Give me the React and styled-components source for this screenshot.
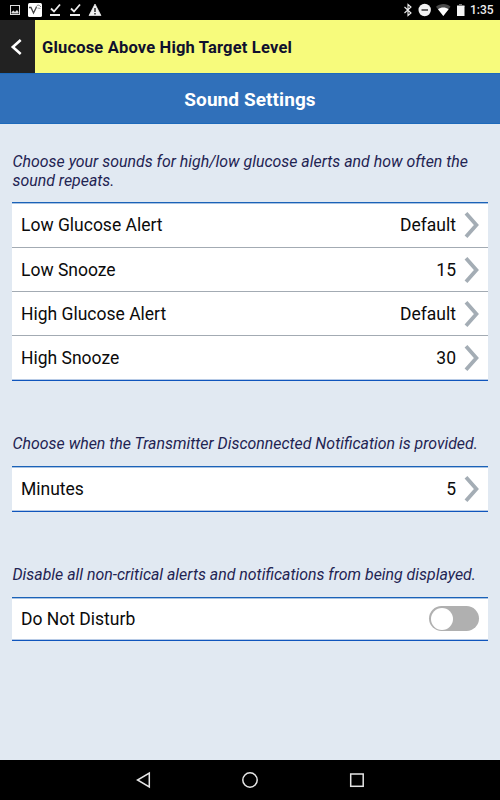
import React, { useState } from "react";
import styled, { createGlobalStyle } from "styled-components";

const GlobalStyle = createGlobalStyle`
    * {
        box-sizing: border-box;
    }

    body {
        margin: 0;
        font-family: Roboto, "Liberation Sans", sans-serif;
        background: #e1e9f2;
    }
`;

const Screen = styled.div`
    display: flex;
    flex-direction: column;
    width: 500px;
    height: 800px;
    overflow: hidden;
    background: #e1e9f2;
`;

const StatusBar = styled.div`
    display: flex;
    justify-content: space-between;
    height: 20px;
    flex: none;
    background: #000;
`;

const StatusIcon = styled.svg`
    display: block;
    flex: none;
    height: 20px;
    width: ${(props) => props.$width}px;
`;

const StatusRight = styled.div`
    display: flex;
    padding-right: 6px;
`;

const Clock = styled.span`
    width: 24px;
    color: #eee;
    font-size: 12px;
    font-weight: 500;
    line-height: 21px;
    white-space: nowrap;
`;

const Header = styled.header`
    display: flex;
    height: 53px;
    flex: none;
    background: #f7fb7c;
`;

const BackButton = styled.button`
    display: flex;
    width: 35px;
    padding: 0;
    border: 0;
    background: #222;
`;

const HeaderTitle = styled.h1`
    margin: 0;
    padding-left: 7px;
    color: #10102e;
    font-size: 16.5px;
    font-weight: 700;
    letter-spacing: 0.18px;
    line-height: 55px;
    white-space: nowrap;
`;

const TitleBar = styled.h2`
    height: 51px;
    flex: none;
    margin: 0;
    border-top: 1px solid #1d6abb;
    border-bottom: 1px solid #1d6abb;
    background: #3070ba;
    color: #fff;
    font-size: 19px;
    font-weight: 700;
    letter-spacing: 0.08px;
    line-height: 51px;
    text-align: center;
`;

const Content = styled.main`
    flex: 1;
    padding: 28px 12px 0;
`;

const Description = styled.p`
    margin: 0 0 12px;
    padding-left: 0.5px;
    color: #1f2452;
    font-size: 15.9px;
    font-style: italic;
    line-height: 19px;
    white-space: pre;
`;

const Section = styled.section`
    & + & {
        margin-top: 53px;
    }

    & + & ${Description} {
        margin-bottom: 13px;
    }
`;

const List = styled.div`
    padding-bottom: 1px;
    border-top: 1px solid #1a62b8;
    border-bottom: 1px solid #0f55bd;
    background: #fff;
    box-shadow: inset 0 1px #a9c3e2, inset 0 -1px #b8cbe6;
`;

const Row = styled.div`
    display: flex;
    align-items: center;
    height: ${(props) => props.$height || 44}px;
    padding: 0 9px;
    color: #0b0b0b;
    font-size: 17.5px;

    & + & {
        border-top: 1px solid #a3abb3;
    }
`;

const Label = styled.span`
    flex: 1;
`;

const Value = styled.span`
    margin-right: 8px;
`;

const Chevron = styled.svg`
    display: block;
    width: 15px;
    height: 28px;
`;

const Toggle = styled.button`
    display: flex;
    justify-content: ${(props) => (props.$on ? "flex-end" : "flex-start")};
    width: 50px;
    height: 25px;
    padding: 1.5px;
    border: 0;
    border-radius: 13px;
    background: ${(props) => (props.$on ? "#3070ba" : "#b0b0b0")};
`;

const Knob = styled.span`
    width: 22px;
    height: 22px;
    border-radius: 50%;
    background: #fff;
`;

const NavBar = styled.nav`
    height: 40px;
    flex: none;
    background: #000;
`;

const NavIcons = styled.svg`
    display: block;
`;

const SettingRow = ({ label, value, height }) => (
    <Row $height={height}>
        <Label>{label}</Label>
        <Value>{value}</Value>
        <Chevron viewBox="0 0 15 28" fill="none">
            <path d="M2 2.2L12.4 14L2 25.8" stroke="#a4adb5" strokeWidth="3.8" />
        </Chevron>
    </Row>
);

const StatusIcons = () => (
    <StatusBar>
        <StatusIcon $width={110} viewBox="0 0 110 20" fill="none">
            {/* picture */}
            <rect x="10.5" y="5.5" width="9" height="9" stroke="#ddd" />
            <path d="M11.5 13.5V12L13.5 10.5L15 12L17 10L18.5 12V13.5Z" fill="#ddd" />
            {/* glucose app */}
            <rect x="28" y="3" width="14" height="14" rx="1.5" fill="#fff" />
            <path d="M29 7.5H31L33.5 13L36.5 7" stroke="#444" strokeWidth="1.3" />
            <path d="M36 7.5C37 4.5 39 4.5 41 7" stroke="#777" strokeWidth="1" />
            <path d="M37.5 8L40.5 8.5" stroke="#888" strokeWidth=".8" />
            {/* finished downloads */}
            <path d="M51 8.5L54 11.5L60 4.5M71 8.5L74 11.5L80 4.5" stroke="#eee" strokeWidth="1.8" />
            <path d="M50 15H60M70 15H80" stroke="#eee" strokeWidth="1.8" />
            {/* warning */}
            <path d="M95 4L101 15.5H89Z" fill="#f2f2f2" stroke="#f2f2f2" strokeWidth=".7" />
            <path d="M95 8V12M95 13V14.4" stroke="#111" strokeWidth="1.3" />
        </StatusIcon>
        <StatusRight>
            <StatusIcon $width={70} viewBox="400 0 70 20" fill="none">
                {/* bluetooth */}
                <path d="M404.5 7L411 13L408 15.5V4.5L411 7L404.5 13" stroke="#eee" strokeWidth="1.1" />
                {/* do not disturb */}
                <circle cx="424.7" cy="10" r="6.2" fill="#f2f2f2" />
                <path d="M421.5 10H428" stroke="#333" strokeWidth="1.5" />
                {/* wifi */}
                <path d="M436 6.8C440 3.2 447 3.2 450.5 6.8L443.3 16Z" fill="#4a4a4a" />
                <path d="M438 9.2C441 6.9 445.5 6.9 448.6 9.2L443.3 16Z" fill="#fff" />
                {/* battery */}
                <path d="M457 5H459V4H462V5H464.5V7H457Z" fill="#777" />
                <path d="M457 6H464.5V16H457Z" fill="#f5f5f5" />
            </StatusIcon>
            <Clock>1:35</Clock>
        </StatusRight>
    </StatusBar>
);

export default () => {
    const [doNotDisturb, setDoNotDisturb] = useState(false);

    return (
        <Screen>
            <GlobalStyle />
            <StatusIcons />
            <Header>
                <BackButton aria-label="Back">
                    <svg width="35" height="53" viewBox="0 0 35 53" fill="none">
                        <path d="M20.7 20L12.8 27L20.7 34" stroke="#fff" strokeWidth="2.6" />
                    </svg>
                </BackButton>
                <HeaderTitle>Glucose Above High Target Level</HeaderTitle>
            </Header>
            <TitleBar>Sound Settings</TitleBar>
            <Content>
                <Section>
                    <Description>
                        {"Choose your sounds for high/low glucose alerts and how often the\nsound repeats."}
                    </Description>
                    <List>
                        <SettingRow label="Low Glucose Alert" value="Default" />
                        <SettingRow label="Low Snooze" value="15" />
                        <SettingRow label="High Glucose Alert" value="Default" />
                        <SettingRow label="High Snooze" value="30" />
                    </List>
                </Section>
                <Section>
                    <Description>
                        Choose when the Transmitter Disconnected Notification is provided.
                    </Description>
                    <List>
                        <SettingRow label="Minutes" value="5" height={43} />
                    </List>
                </Section>
                <Section>
                    <Description>
                        Disable all non-critical alerts and notifications from being displayed.
                    </Description>
                    <List>
                        <Row $height={41}>
                            <Label>Do Not Disturb</Label>
                            <Toggle
                                $on={doNotDisturb}
                                role="switch"
                                aria-checked={doNotDisturb}
                                aria-label="Do Not Disturb"
                                onClick={() => setDoNotDisturb(!doNotDisturb)}
                            >
                                <Knob />
                            </Toggle>
                        </Row>
                    </List>
                </Section>
            </Content>
            <NavBar>
                <NavIcons width="500" height="40" viewBox="0 0 500 40" fill="none" stroke="#e6e6e6" strokeWidth="1.5">
                    <path d="M149.3 13V27L137.5 20Z" />
                    <circle cx="250" cy="20" r="7.2" />
                    <rect x="350.7" y="14" width="12.5" height="12.3" />
                </NavIcons>
            </NavBar>
        </Screen>
    );
};
